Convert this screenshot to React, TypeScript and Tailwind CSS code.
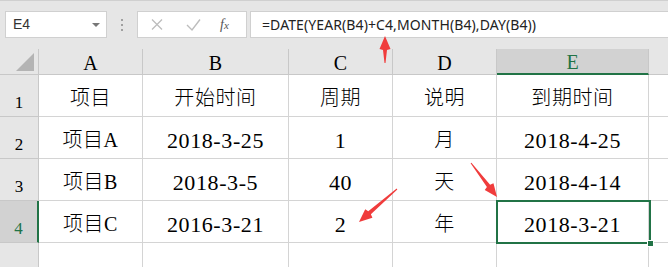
const CN = "font-['Liberation_Serif','Noto_Sans_CJK_SC',serif]";

const cols = ["A", "B", "C", "D", "E"];

const rows = [
  ["项目", "开始时间", "周期", "说明", "到期时间"],
  ["项目A", "2018-3-25", "1", "月", "2018-4-25"],
  ["项目B", "2018-3-5", "40", "天", "2018-4-14"],
  ["项目C", "2016-3-21", "2", "年", "2018-3-21"],
  ["", "", "", "", ""],
];

const hasCjk = (s: string) => /[\u4e00-\u9fff]/.test(s);

function Arrow({ x1, y1, x2, y2 }: { x1: number; y1: number; x2: number; y2: number }) {
  // tapered arrow from tail (x1,y1) to tip (x2,y2)
  const dx = x2 - x1;
  const dy = y2 - y1;
  const len = Math.hypot(dx, dy);
  const ux = dx / len;
  const uy = dy / len;
  const nx = -uy;
  const ny = ux;
  const head = 14;
  const bx = x2 - ux * head;
  const by = y2 - uy * head;
  const pts = [
    [x1 + nx * 0.5, y1 + ny * 0.5],
    [bx + nx * 2, by + ny * 2],
    [bx + nx * 5.5 + ux * 1, by + ny * 5.5 + uy * 1],
    [x2, y2],
    [bx - nx * 5.5 + ux * 1, by - ny * 5.5 + uy * 1],
    [bx - nx * 2, by - ny * 2],
    [x1 - nx * 0.5, y1 - ny * 0.5],
  ];
  return <polygon points={pts.map((p) => p.join(",")).join(" ")} fill="#f03c3c" />;
}

export default function App() {
  return (
    <div className="relative w-[668px] h-[267px] overflow-hidden bg-white font-['Liberation_Sans',sans-serif]">
      {/* Formula bar */}
      <div className="h-[49px] bg-[#e6e6e6] border-t border-[#d0d0d0] flex items-start pt-[10px]">
        <div className="ml-[5px] w-[102px] h-[27px] bg-white border border-[#d0d0d0] flex items-center justify-between pl-[7px] pr-[6px]">
          <span className="text-[14px] text-[#333]">E4</span>
          <span className="w-0 h-0 border-l-[4px] border-r-[4px] border-t-[4px] border-l-transparent border-r-transparent border-t-[#777]" />
        </div>
        <div className="w-[30px] h-[27px] flex flex-col items-center justify-center gap-[3px]">
          <span className="w-[2px] h-[2px] bg-[#a0a0a0]" />
          <span className="w-[2px] h-[2px] bg-[#a0a0a0]" />
          <span className="w-[2px] h-[2px] bg-[#a0a0a0]" />
        </div>
        <div className="w-[110px] h-[27px] bg-white border border-[#d0d0d0] flex items-center">
          <svg width="36" height="25" viewBox="0 0 36 25" className="ml-[1px]">
            <path d="M13 7.5 L23 17.5 M23 7.5 L13 17.5" stroke="#bdbdbd" strokeWidth="1.3" fill="none" />
          </svg>
          <svg width="36" height="25" viewBox="0 0 36 25">
            <path d="M12 13 L17 18 L25 7.5" stroke="#bdbdbd" strokeWidth="1.4" fill="none" />
          </svg>
          <span className="ml-[9px] text-[14px] italic text-[#555] font-['Liberation_Serif',serif] leading-none">
            f<span className="text-[11px]">x</span>
          </span>
        </div>
        <div className="ml-[3px] flex-1 h-[27px] bg-white border border-[#d0d0d0] border-r-0 flex items-center pl-[11px]">
          <span className="text-[14px] text-[#222] tracking-[0.1px] font-['Noto_Sans',sans-serif]">
            =DATE(YEAR(B4)+C4,MONTH(B4),DAY(B4))
          </span>
        </div>
      </div>

      {/* Grid */}
      <div className={`grid grid-cols-[39px_104px_146px_104px_104px_152px_1fr] grid-rows-[26px_42px_42px_42px_42px_42px] ${CN}`}>
        {/* corner */}
        <div className="bg-[#e6e6e6] border-r border-b border-[#c8c8c8] flex items-end justify-end pr-[4px] pb-[3px]">
          <svg width="18" height="18" viewBox="0 0 18 18">
            <polygon points="18,0 18,18 0,18" fill="#b4b4b4" />
          </svg>
        </div>
        {cols.map((c) => (
          <div
            key={c}
            className={
              c === "E"
                ? "bg-[#d2d2d2] border-r border-[#c8c8c8] border-b-2 border-b-[#217346] flex items-center justify-center text-[20px] text-[#217346] pt-[2px]"
                : "bg-[#e6e6e6] border-r border-b border-[#c8c8c8] flex items-center justify-center text-[20px] text-black pt-[2px]"
            }
          >
            {c}
          </div>
        ))}
        <div className="bg-[#e6e6e6] border-b border-[#c8c8c8]" />

        {rows.map((r, i) => (
          <>
            <div
              key={`h${i}`}
              className={
                i === 3
                  ? "bg-[#d2d2d2] border-r-2 border-r-[#217346] border-b border-[#c8c8c8] flex items-end justify-center text-[17px] text-[#217346] pb-[1px]"
                  : "bg-[#e6e6e6] border-r border-b border-[#c8c8c8] flex items-end justify-center text-[17px] text-black pb-[1px]"
              }
            >
              {i < 4 ? i + 1 : ""}
            </div>
            {r.map((v, j) => (
              <div
                key={`c${i}-${j}`}
                className={
                  hasCjk(v)
                    ? "border-r border-b border-[#d4d4d4] flex items-center justify-center pt-[5px] text-[20px] tracking-[0.6px] text-black font-light"
                    : "border-r border-b border-[#d4d4d4] flex items-center justify-center pt-[5px] text-[22px] tracking-[0.6px] text-black"
                }
              >
                {v}
              </div>
            ))}
            <div key={`f${i}`} className="border-b border-[#d4d4d4]" />
          </>
        ))}
      </div>

      {/* Selection box on E4 */}
      <div className="absolute left-[496px] top-[200px] w-[155px] h-[44px] border-2 border-[#217346] pointer-events-none">
        <div className="absolute -right-[5px] -bottom-[5px] w-[7px] h-[7px] bg-[#217346] border border-white" />
      </div>

      {/* Annotation arrows */}
      <svg className="absolute left-0 top-0 pointer-events-none" width="668" height="267">
        <Arrow x1={385} y1={63} x2={385} y2={36} />
        <Arrow x1={397} y1={189} x2={359} y2={222} />
        <Arrow x1={471} y1={163} x2={497} y2={197} />
      </svg>
    </div>
  );
}
